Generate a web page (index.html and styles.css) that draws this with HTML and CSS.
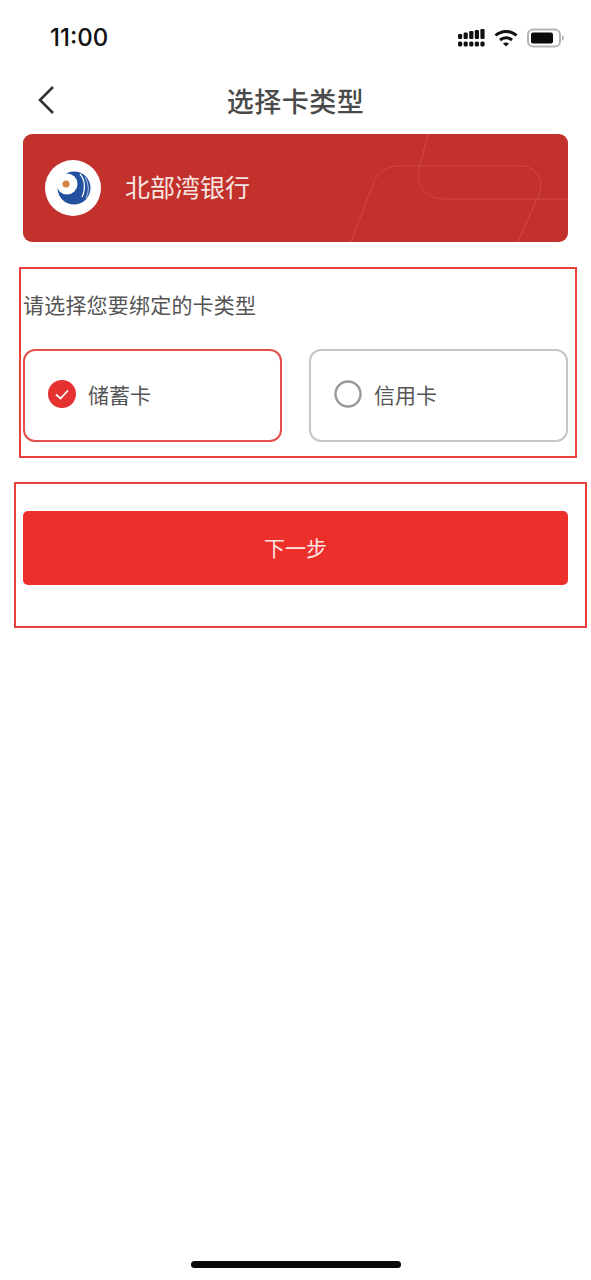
FILE: index.html
```html
<!DOCTYPE html>
<html lang="zh-CN">
<head>
  <meta charset="UTF-8">
  <meta name="viewport" content="width=device-width, initial-scale=1.0">
  <title>选择卡类型</title>
  <link rel="stylesheet" href="styles.css">
</head>
<body>
  <div class="phone">
    <!-- Status bar -->
    <div class="status-bar">
      <span class="time">11:00</span>
      <div class="status-icons">
        <svg class="signal" width="27" height="18" viewBox="0 0 27 18" fill="#111">
          <rect x="0" y="5" width="4.2" height="5" rx="1.2"/>
          <rect x="5.6" y="3.5" width="4.2" height="6.5" rx="1.2"/>
          <rect x="11.2" y="2" width="4.2" height="8" rx="1.2"/>
          <rect x="16.8" y="1" width="4.2" height="9" rx="1.2"/>
          <rect x="22.4" y="0" width="4.2" height="10" rx="1.2"/>
          <rect x="0" y="12.5" width="4.2" height="5" rx="1.5"/>
          <rect x="5.6" y="12.5" width="4.2" height="5" rx="1.5"/>
          <rect x="11.2" y="12.5" width="4.2" height="5" rx="1.5"/>
          <rect x="16.8" y="12.5" width="4.2" height="5" rx="1.5"/>
          <rect x="22.4" y="12.5" width="4.2" height="5" rx="1.5"/>
        </svg>
        <svg class="wifi" width="24" height="18" viewBox="0 0 24 18" fill="none" stroke="#111" stroke-width="3">
          <path d="M1.5 6.5C7.5 1 16.5 1 22.5 6.5"/>
          <path d="M6 11C9.5 8 14.5 8 18 11"/>
          <path d="M9 14.6L12 17.5L15 14.6C13.2 13.2 10.8 13.2 9 14.6Z" fill="#111" stroke="none"/>
        </svg>
        <svg class="battery" width="37" height="20" viewBox="0 0 37 20">
          <rect x="1" y="1.5" width="32" height="17" rx="5" fill="none" stroke="#b5b5b5" stroke-width="2"/>
          <rect x="4" y="4.5" width="22" height="11" rx="2" fill="#0a0a0a"/>
          <rect x="35" y="7.5" width="1.5" height="5" rx="0.7" fill="#aaa"/>
        </svg>
      </div>
    </div>

    <!-- Nav bar -->
    <div class="nav-bar">
      <svg class="back" width="18" height="30" viewBox="0 0 18 30" fill="none" stroke="#333" stroke-width="2.6">
        <path d="M16 2L3 15L16 28"/>
      </svg>
      <h1 class="nav-title">选择卡类型</h1>
    </div>

    <!-- Bank card -->
    <div class="bank-card">
      <svg class="card-lines" width="545" height="108" viewBox="0 0 545 108" fill="none" stroke="#cf4a42" stroke-width="1">
        <path d="M405 0L396 35C392 52 404 65 420 65H545"/>
        <path d="M328 108L350 50C354 38 364 32 376 32H498C512 32 520 44 517 58L495 108"/>
      </svg>
      <div class="bank-logo">
        <svg width="46" height="46" viewBox="0 0 46 46">
          <circle cx="24" cy="23" r="16.5" fill="#23509f"/>
          <circle cx="17" cy="19" r="10.5" fill="#fff"/>
          <circle cx="16" cy="19" r="3.5" fill="#d9813f"/>
          <path d="M30 9C35 15 36 24 32 32" fill="none" stroke="#fff" stroke-width="1.2"/>
          <path d="M35 12C39 19 39 27 36 33" fill="none" stroke="#9db4da" stroke-width="1.2"/>
        </svg>
      </div>
      <span class="bank-name">北部湾银行</span>
    </div>

    <!-- Card type -->
    <section class="type-box">
      <p class="type-label">请选择您要绑定的卡类型</p>
      <div class="options">
        <div class="option selected">
          <svg width="28" height="28" viewBox="0 0 28 28">
            <circle cx="14" cy="14" r="14" fill="#e5312f"/>
            <path d="M8 14.5L12.5 18.5L20 10.5" fill="none" stroke="#fff" stroke-width="1.8"/>
          </svg>
          <span>储蓄卡</span>
        </div>
        <div class="option">
          <svg width="28" height="28" viewBox="0 0 28 28">
            <circle cx="14" cy="14" r="12.5" fill="#fff" stroke="#999" stroke-width="2.4"/>
          </svg>
          <span>信用卡</span>
        </div>
      </div>
    </section>

    <!-- Next step -->
    <section class="next-box">
      <button class="next-btn">下一步</button>
    </section>

    <div class="home-bar"></div>
  </div>
</body>
</html>
```

FILE: styles.css
```css
/* General Styles */
* {
  box-sizing: border-box;
}

body {
  margin: 0;
  background-color: #fff;
  font-family: "Noto Sans CJK SC", "Noto Sans", sans-serif;
  color: #444;
}

.phone {
  position: relative;
  width: 591px;
  height: 1280px;
  overflow: hidden;
}

/* Status Bar */
.status-bar {
  height: 75px;
  display: flex;
  justify-content: space-between;
  align-items: center;
  padding: 0 27px 0 50px;
}

.time {
  font-family: Inter, sans-serif;
  font-size: 24px;
  font-weight: 500;
  color: #111;
}

.status-icons {
  display: flex;
  align-items: center;
  gap: 9px;
}

/* Nav Bar */
.nav-bar {
  height: 59px;
  padding-bottom: 9px;
  display: flex;
  align-items: center;
  justify-content: center;
  position: relative;
}

.back {
  position: absolute;
  left: 37px;
  top: 10px;
}

.nav-title {
  margin: 0;
  font-size: 27px;
  font-weight: 500;
  letter-spacing: 0.5px;
  color: #4a4a4a;
}

/* Bank Card */
.bank-card {
  position: relative;
  height: 108px;
  margin: 0 23px;
  padding: 0 0 0 22px;
  display: flex;
  align-items: center;
  gap: 24px;
  background-color: #c2312b;
  border-radius: 9px;
  overflow: hidden;
}

.card-lines {
  position: absolute;
  left: 0;
  top: 0;
}

.bank-logo {
  width: 56px;
  height: 56px;
  border-radius: 50%;
  background-color: #fff;
  display: flex;
  align-items: center;
  justify-content: center;
}

.bank-name {
  padding-bottom: 4px;
  font-size: 25px;
  color: #f6e6e2;
}

/* Card Type Box */
.type-box {
  height: 191px;
  margin: 25px 14px 0 19px;
  padding: 0 7px 0 2px;
  border: 2px solid #e5403c;
}

.type-label {
  margin: 0;
  padding-top: 19px;
  height: 80px;
  font-size: 21px;
  letter-spacing: 0.2px;
  line-height: 32px;
  color: #555;
}

.options {
  display: flex;
  justify-content: space-between;
}

.option {
  width: 259px;
  height: 93px;
  padding: 0 0 3px 23px;
  display: flex;
  align-items: center;
  gap: 12px;
  border: 2px solid #c6c6c6;
  border-radius: 12px;
  font-size: 21px;
  color: #555;
}

.option.selected {
  border-color: #e5504c;
}

/* Next Step */
.next-box {
  height: 146px;
  margin: 24px 4px 0 14px;
  padding: 27px 7px 0;
  border: 2px solid #e5403c;
}

.next-btn {
  display: block;
  width: 545px;
  height: 74px;
  padding: 0 0 2px;
  border: none;
  border-radius: 5px;
  background-color: #ec2f2b;
  color: #fbe6e2;
  font-family: inherit;
  font-size: 21px;
}

/* Home Indicator */
.home-bar {
  position: absolute;
  left: 191px;
  bottom: 12px;
  width: 210px;
  height: 7px;
  border-radius: 4px;
  background-color: #0a0a0a;
}
```
